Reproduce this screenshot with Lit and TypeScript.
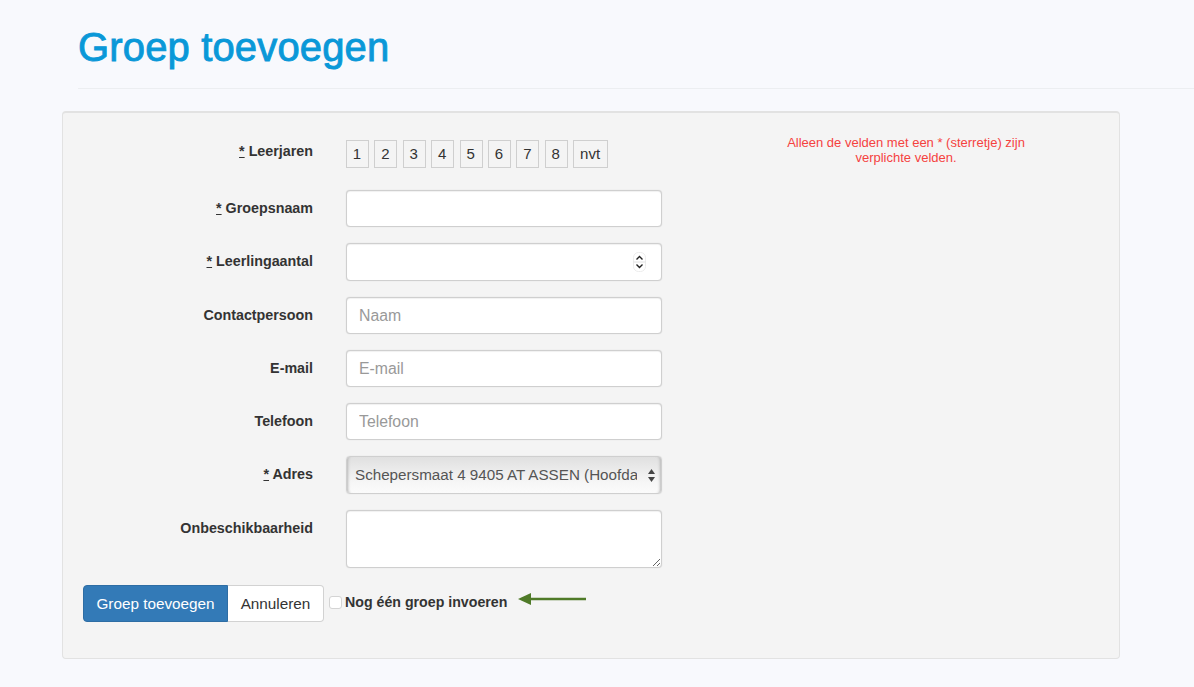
import { LitElement, html, css } from "lit";
import { customElement } from "lit/decorators.js";

const YEARS = ["1", "2", "3", "4", "5", "6", "7", "8", "nvt"];

@customElement("app-root")
export class AppRoot extends LitElement {
  static styles = css`
    :host {
      display: block;
      min-height: 687px;
      height: 687px;
      overflow: hidden;
      box-sizing: border-box;
      background: #f8f9fd;
      font-family: "Liberation Sans", Arial, sans-serif;
      color: #333;
      padding-top: 22px;
      --field-border: #cfcfcf;
    }
    * { box-sizing: border-box; }
    .head {
      margin-left: 78px;
      height: 67px;
      border-bottom: 1px solid #eceef1;
    }
    h1 {
      margin: 0;
      font-size: 40px;
      line-height: 50px;
      font-weight: 400;
      letter-spacing: 0.15px;
      color: #0a98d8;
      -webkit-text-stroke: 0.9px #0a98d8;
    }
    .card {
      margin: 22px 0 0 62px;
      width: 1058px;
      height: 548px;
      background: #f4f4f4;
      border: 1px solid #e2e2e2;
      border-top-width: 2px;
      border-radius: 4px;
      padding: 27px 20px 0;
      display: flex;
      flex-wrap: wrap;
      align-content: flex-start;
    }
    .form {
      width: 579px;
      display: grid;
      grid-template-columns: 230px 316px;
      column-gap: 33px;
      row-gap: 16px;
    }
    label.name {
      justify-self: end;
      font-size: 14.3px;
      font-weight: 700;
      line-height: 18px;
      padding-top: 9px;
      color: #333;
    }
    label.first { padding-top: 2px; }
    .star { text-decoration: underline; }
    .years {
      display: flex;
      gap: 5.4px;
      height: 28px;
      margin-bottom: 6px;
    }
    .year {
      min-width: 23px;
      height: 28px;
      border: 1px solid #cfcfcf;
      background: #f4f4f4;
      font: 15px/26px "Liberation Sans", Arial, sans-serif;
      color: #333;
      text-align: center;
      padding: 0 1px 0 0;
    }
    .year.wide { width: 35px; }
    .field {
      position: relative;
      height: 37.3px;
    }
    input.text, select, textarea {
      display: block;
      width: 100%;
      height: 100%;
      border: 1px solid var(--field-border);
      border-radius: 4px;
      background: #fff;
      font: 15.8px "Liberation Sans", Arial, sans-serif;
      color: #555;
      padding: 1px 12px 0;
      outline: none;
      box-shadow: 0 0 1px #ccc, inset 0 1px 1px rgba(0, 0, 0, 0.06);
    }
    input.text::placeholder { color: #999; opacity: 1; }
    .spin {
      position: absolute;
      right: 16px;
      top: 9px;
      width: 13px;
      height: 20px;
    }
    select {
      appearance: none;
      -webkit-appearance: none;
      font-size: 15.2px;
      padding: 0 24px 1px 8px;
      background: linear-gradient(#e0e0e0, #f6f6f6 70%, #fbfbfb);
      box-shadow: inset 4px 0 3px -3px #b5b5b5, inset -4px 0 3px -3px #b5b5b5, 0 0 1px #ccc;
    }
    .sel-arrows {
      position: absolute;
      right: 6px;
      top: 12px;
      width: 9px;
      height: 15px;
    }
    .area { height: 58.5px; }
    textarea { resize: vertical; padding: 8px 12px; }
    .note {
      width: 260px;
      margin: -5px 0 0 114px;
      color: #f4423f;
      font-size: 13px;
      line-height: 15px;
      text-align: center;
    }
    .foot {
      width: 100%;
      margin-top: 17px;
      display: flex;
      align-items: flex-start;
    }
    .group { display: flex; height: 37px; }
    .btn {
      font: 15.3px "Liberation Sans", Arial, sans-serif;
      height: 37px;
      padding: 0;
    }
    .primary {
      width: 145px;
      color: #fff;
      background: #337ab7;
      border: 1px solid #2e6da4;
      border-radius: 4px 0 0 4px;
    }
    .secondary {
      width: 96px;
      color: #333;
      background: #fff;
      border: 1px solid #d2d2d2;
      border-left: 0;
      border-radius: 0 4px 4px 0;
    }
    .check {
      margin-left: 5px;
      height: 33px;
      display: flex;
      align-items: center;
      gap: 3px;
      font-size: 14.2px;
      font-weight: 700;
      color: #333;
    }
    .check input {
      appearance: none;
      -webkit-appearance: none;
      width: 13px;
      height: 13px;
      margin: 1px 0 0;
      background: #fff;
      border: 1px solid #d4d4d4;
      border-radius: 3px;
    }
    .arrow {
      margin: 7px 0 0 11px;
      width: 68px;
      height: 14px;
    }
  `;

  private star() {
    return html`<span class="star">*</span> `;
  }

  render() {
    return html`
      <div class="head"><h1>Groep toevoegen</h1></div>
      <div class="card">
        <div class="form">
          <label class="name first">${this.star()}Leerjaren</label>
          <div class="years">
            ${YEARS.map(
              (y) => html`<button class="year ${y === "nvt" ? "wide" : ""}">${y}</button>`
            )}
          </div>

          <label class="name">${this.star()}Groepsnaam</label>
          <div class="field"><input class="text" type="text" /></div>

          <label class="name">${this.star()}Leerlingaantal</label>
          <div class="field">
            <input class="text" type="text" />
            <svg class="spin" viewBox="0 0 13 20">
              <rect x="0.5" y="0.5" width="12" height="19" rx="5" fill="#fff" stroke="#ececec" />
              <line x1="0.5" y1="10" x2="12.5" y2="10" stroke="#e2e2e2" />
              <path d="M3.5 7.5 6.5 4.5 9.5 7.5" fill="none" stroke="#222" stroke-width="1.4" />
              <path d="M3.5 12.5 6.5 15.5 9.5 12.5" fill="none" stroke="#222" stroke-width="1.4" />
            </svg>
          </div>

          <label class="name">Contactpersoon</label>
          <div class="field"><input class="text" type="text" placeholder="Naam" /></div>

          <label class="name">E-mail</label>
          <div class="field"><input class="text" type="text" placeholder="E-mail" /></div>

          <label class="name">Telefoon</label>
          <div class="field"><input class="text" type="text" placeholder="Telefoon" /></div>

          <label class="name">${this.star()}Adres</label>
          <div class="field">
            <select>
              <option>Schepersmaat 4 9405 AT ASSEN (Hoofdadres)</option>
            </select>
            <svg class="sel-arrows" viewBox="0 0 9 15">
              <path d="M4.5 1 8 6H1Z" fill="#444" />
              <path d="M4.5 14 8 9H1Z" fill="#444" />
            </svg>
          </div>

          <label class="name">Onbeschikbaarheid</label>
          <div class="field area"><textarea></textarea></div>
        </div>

        <div class="note">
          Alleen de velden met een * (sterretje) zijn<br />verplichte velden.
        </div>

        <div class="foot">
          <div class="group">
            <button class="btn primary">Groep toevoegen</button>
            <button class="btn secondary">Annuleren</button>
          </div>
          <label class="check"><input type="checkbox" />Nog één groep invoeren</label>
          <svg class="arrow" viewBox="0 0 68 14">
            <line x1="8" y1="7" x2="68" y2="7" stroke="#4f7a28" stroke-width="2.6" />
            <path d="M0 7 13 1V13Z" fill="#4f7a28" />
          </svg>
        </div>
      </div>
    `;
  }
}
